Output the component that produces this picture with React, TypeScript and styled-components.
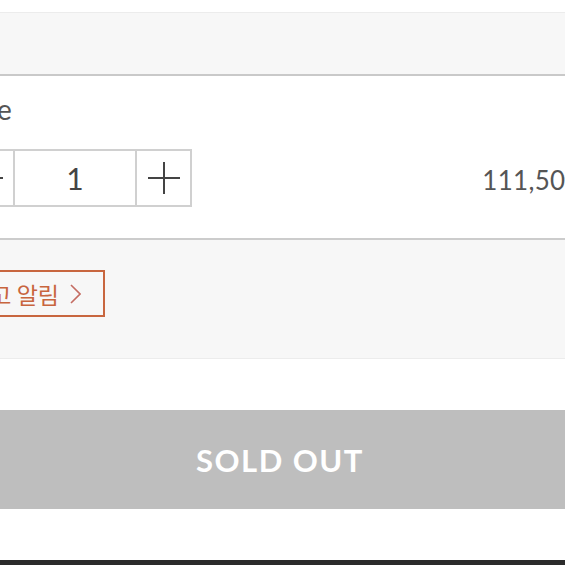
import React from 'react';
import styled, { createGlobalStyle } from 'styled-components';

const GlobalStyle = createGlobalStyle`
  html, body {
    margin: 0;
    padding: 0;
    background: #ffffff;
    overflow: hidden;
  }
  * {
    box-sizing: border-box;
  }
`;

const Viewport = styled.div`
  width: 565px;
  height: 565px;
  overflow: hidden;
  padding-top: 12px;
  font-family: Lato, 'Noto Sans CJK KR', sans-serif;
`;

const Panel = styled.div`
  width: 740px;
  margin-left: -90px;
  display: flex;
  flex-direction: column;
`;

const SummaryStrip = styled.div`
  height: 64px;
  background: #f7f7f7;
  border-top: 1px solid #ececec;
  border-bottom: 2px solid #c9c9c9;
`;

const OptionBlock = styled.div`
  display: flex;
  flex-direction: column;
  gap: 23px;
  padding: 16px 45px 31px 48px;
  border-bottom: 2px solid #cccccc;
`;

const OptionLabel = styled.div`
  font-size: 28px;
  line-height: 34px;
  color: #555555;
`;

const OptionRow = styled.div`
  display: flex;
  align-items: center;
  justify-content: space-between;
`;

const Stepper = styled.div`
  display: flex;
  height: 58px;
  border: 2px solid #d0d0d0;
`;

const StepButton = styled.button<{ $side: 'left' | 'right' }>`
  width: 55px;
  padding: 0;
  margin: 0;
  background: #ffffff;
  border: none;
  ${({ $side }) => ($side === 'left' ? 'border-right: 2px solid #d0d0d0;' : 'border-left: 2px solid #d0d0d0;')}
  display: flex;
  align-items: center;
  justify-content: center;
  cursor: pointer;
`;

const QtyValue = styled.div`
  width: 120px;
  display: flex;
  align-items: center;
  justify-content: center;
  font-size: 30px;
  color: #444444;
`;

const Price = styled.div`
  font-size: 26px;
  color: #555555;
  letter-spacing: 0.3px;
`;

const NoticeBlock = styled.div`
  background: #f7f7f7;
  padding: 30px 0 41px 13px;
  border-bottom: 1px solid #ececec;
`;

const RestockButton = styled.button`
  display: inline-flex;
  align-items: center;
  gap: 11px;
  height: 47px;
  padding: 0 22px 0 23px;
  background: transparent;
  border: 2px solid #c8663f;
  color: #c8653e;
  font-family: 'Noto Sans CJK KR', Lato, sans-serif;
  font-size: 23px;
  cursor: pointer;
`;

const Gap = styled.div<{ $h: number }>`
  height: ${({ $h }) => $h}px;
`;

const SoldOutButton = styled.button`
  height: 99px;
  width: 100%;
  border: none;
  background: #bebebe;
  color: #ffffff;
  font-family: Lato, sans-serif;
  font-weight: 700;
  font-size: 31px;
  letter-spacing: 1.5px;
`;

const FooterBar = styled.div`
  height: 20px;
  background: #2b2b2b;
`;

const MinusIcon = () => (
  <svg width="32" height="32" viewBox="0 0 32 32">
    <line x1="0" y1="16" x2="32" y2="16" stroke="#444" strokeWidth="2" />
  </svg>
);

const PlusIcon = () => (
  <svg width="32" height="32" viewBox="0 0 32 32">
    <line x1="0" y1="16" x2="32" y2="16" stroke="#444" strokeWidth="2" />
    <line x1="16" y1="0" x2="16" y2="32" stroke="#444" strokeWidth="2" />
  </svg>
);

const Chevron = () => (
  <svg width="11" height="20" viewBox="0 0 11 20">
    <polyline points="1,1 10,10 1,19" fill="none" stroke="#c46c62" strokeWidth="1.6" />
  </svg>
);

export default function App() {
  return (
    <Viewport>
      <GlobalStyle />
      <Panel>
        <SummaryStrip />
        <OptionBlock>
          <OptionLabel>Free</OptionLabel>
          <OptionRow>
            <Stepper>
              <StepButton $side="left" aria-label="수량 감소">
                <MinusIcon />
              </StepButton>
              <QtyValue>1</QtyValue>
              <StepButton $side="right" aria-label="수량 증가">
                <PlusIcon />
              </StepButton>
            </Stepper>
            <Price>111,500원</Price>
          </OptionRow>
        </OptionBlock>
        <NoticeBlock>
          <RestockButton>
            재입고 알림
            <Chevron />
          </RestockButton>
        </NoticeBlock>
        <Gap $h={51} />
        <SoldOutButton>SOLD OUT</SoldOutButton>
        <Gap $h={51} />
        <FooterBar />
      </Panel>
    </Viewport>
  );
}
